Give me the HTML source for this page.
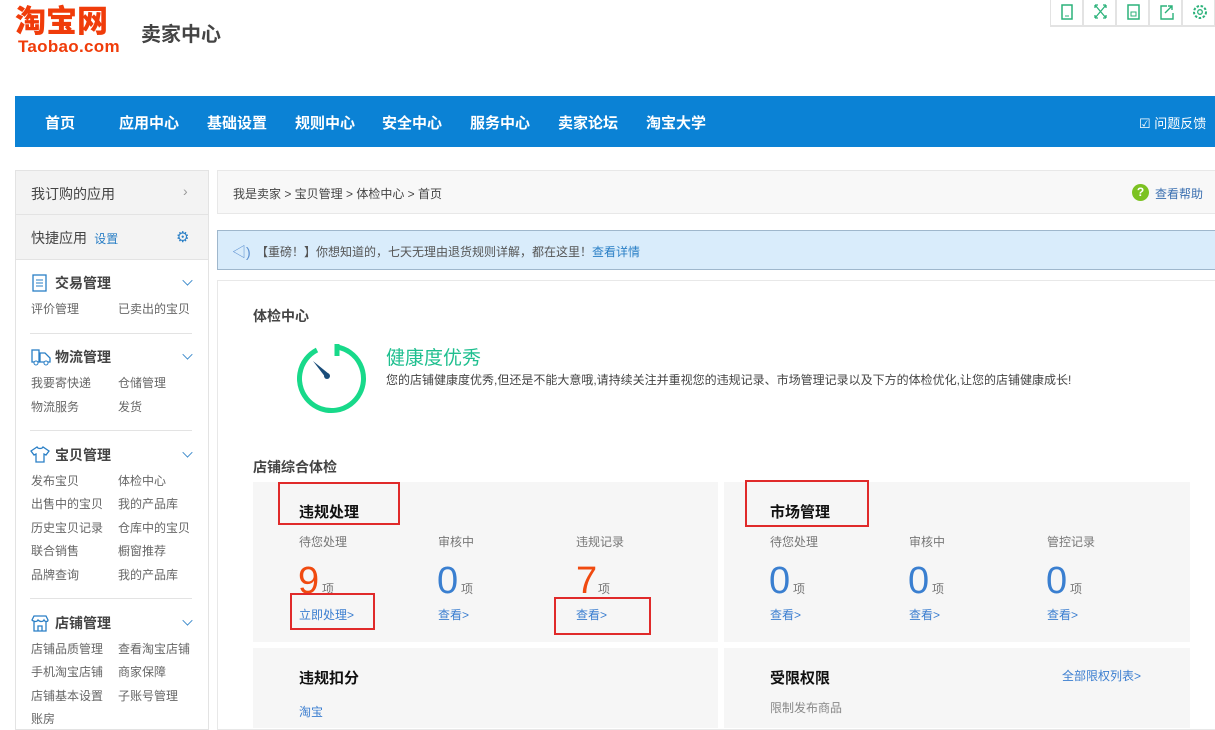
<!DOCTYPE html>
<html><head><meta charset="utf-8"><style>
*{margin:0;padding:0;box-sizing:border-box}
body{width:1215px;height:724px;overflow:hidden;background:#fff;font-family:"Liberation Sans","Noto Sans CJK SC",sans-serif;color:#333;position:relative;font-size:12px}
.a{position:absolute;white-space:nowrap}
.nav{left:15px;top:96px;width:1200px;height:51px;background:#0b82d5}
.nav span{position:absolute;top:16px;color:#fff;font-size:15px;font-weight:bold}
.tb{top:0;width:33px;height:26px;border:1px solid #e3e3e3;border-top:none}
.side{left:15px;top:170px;width:194px;height:560px;border:1px solid #e3e3e3;background:#fff}
.gh{background:#f3f3f3;border-bottom:1px solid #e3e3e3}
.t{font-size:14px;font-weight:bold;color:#444}
.it{font-size:12px;color:#666}
.dv{left:30px;width:162px;height:1px;background:#e3e3e3}
.chev{width:9px;height:9px;border-right:1.5px solid #2a7fc6;border-bottom:1.5px solid #2a7fc6;transform:rotate(45deg) scale(0.8,0.8)}
.card{background:#f6f6f6}
.lb{font-size:12px;color:#777}
.big{font-size:38px;line-height:38px}
.lk{color:#3b7ed0;font-size:12px}
.red{border:2px solid #e02a2a}
</style></head><body>
<div class="a" style="left:15px;top:6px;font-size:31px;line-height:31px;font-weight:900;color:#f03c0a">淘宝网</div>
<div class="a" style="left:18px;top:38px;font-size:17px;line-height:18px;font-weight:bold;color:#f03c0a;letter-spacing:0.3px">Taobao.com</div>
<div class="a" style="left:141px;top:18px;font-size:20px;font-weight:bold;color:#444">卖家中心</div>
<div class="a" style="left:1050px;top:26px;width:165px;height:1px;background:#e3e3e3"></div>
<div class="a tb" style="left:1050px"><svg width="33" height="26"><rect x="11" y="5" width="10" height="14" fill="none" stroke="#2bb27a" stroke-width="1.5"/><line x1="14" y1="16" x2="18" y2="16" stroke="#2bb27a"/></svg></div>
<div class="a tb" style="left:1083px"><svg width="33" height="26"><path d="M11 5l11 13M22 5L11 18M11 5h3M11 5v3M22 5h-3M22 5v3M11 18h3M11 18v-3M22 18h-3M22 18v-3" stroke="#2bb27a" stroke-width="1.3" fill="none"/></svg></div>
<div class="a tb" style="left:1116px"><svg width="33" height="26"><rect x="11" y="5" width="11" height="14" fill="none" stroke="#2bb27a" stroke-width="1.5"/><rect x="14" y="12" width="5" height="4" fill="none" stroke="#2bb27a"/></svg></div>
<div class="a tb" style="left:1149px"><svg width="33" height="26"><path d="M17 6h-6v13h12v-6M15 13l7-7M18 6h4v4" stroke="#2bb27a" stroke-width="1.4" fill="none"/></svg></div>
<div class="a tb" style="left:1182px"><svg width="33" height="26"><circle cx="17" cy="12" r="6" fill="none" stroke="#2bb27a" stroke-width="2" stroke-dasharray="2.5 1.6"/><circle cx="17" cy="12" r="2.3" fill="none" stroke="#2bb27a" stroke-width="1.3"/></svg></div>

<div class="a nav">
<span style="left:30px">首页</span><span style="left:104px">应用中心</span><span style="left:192px">基础设置</span><span style="left:280px">规则中心</span><span style="left:367px">安全中心</span><span style="left:455px">服务中心</span><span style="left:543px">卖家论坛</span><span style="left:631px">淘宝大学</span>
<span style="left:1124px;font-weight:normal;font-size:13px;top:17px">☑ 问题反馈</span>
</div>

<div class="a side"></div>
<div class="a gh" style="left:16px;top:171px;width:192px;height:44px"></div>
<div class="a" style="left:31px;top:184px;font-size:14px;color:#444">我订购的应用</div>
<div class="a" style="left:183px;top:183px;font-size:14px;color:#999">›</div>
<div class="a gh" style="left:16px;top:215px;width:192px;height:45px"></div>
<div class="a" style="left:31px;top:228px;font-size:14px;color:#444">快捷应用 <span style="font-size:12px;color:#2a7fc6">&nbsp;设置</span></div>
<div class="a" style="left:176px;top:228px;font-size:15px;color:#2a7fc6">⚙</div>

<svg class="a" style="left:31px;top:274px" width="18" height="18"><rect x="2" y="1" width="13" height="16" fill="none" stroke="#2a7fc6" stroke-width="1.3"/><path d="M5 6h7M5 9h7M5 12h7" stroke="#2a7fc6"/></svg>
<div class="a t" style="left:55px;top:273px">交易管理</div><div class="a chev" style="left:183px;top:276px"></div>
<div class="a it" style="left:31px;top:300px">评价管理</div><div class="a it" style="left:118px;top:300px">已卖出的宝贝</div>
<div class="a dv" style="top:333px"></div>
<svg class="a" style="left:31px;top:348px" width="22" height="18"><rect x="1" y="2" width="7" height="12" fill="none" stroke="#2a7fc6" stroke-width="1.3"/><path d="M9 5h5l5 5v4H9z" fill="none" stroke="#2a7fc6" stroke-width="1.3"/><circle cx="5" cy="15" r="2" fill="#fff" stroke="#2a7fc6"/><circle cx="15" cy="15" r="2" fill="#fff" stroke="#2a7fc6"/></svg>
<div class="a t" style="left:55px;top:347px">物流管理</div><div class="a chev" style="left:183px;top:350px"></div>
<div class="a it" style="left:31px;top:374px">我要寄快递</div><div class="a it" style="left:118px;top:374px">仓储管理</div>
<div class="a it" style="left:31px;top:398px">物流服务</div><div class="a it" style="left:118px;top:398px">发货</div>
<div class="a dv" style="top:430px"></div>
<svg class="a" style="left:30px;top:445px" width="20" height="18"><path d="M7 2L1 6l3 4 2-1v8h8V9l2 1 3-4-6-4c-1 2-5 2-6 0z" fill="none" stroke="#2a7fc6" stroke-width="1.3"/></svg>
<div class="a t" style="left:55px;top:445px">宝贝管理</div><div class="a chev" style="left:183px;top:448px"></div>
<div class="a it" style="left:31px;top:472px">发布宝贝</div><div class="a it" style="left:118px;top:472px">体检中心</div>
<div class="a it" style="left:31px;top:495px">出售中的宝贝</div><div class="a it" style="left:118px;top:495px">我的产品库</div>
<div class="a it" style="left:31px;top:519px">历史宝贝记录</div><div class="a it" style="left:118px;top:519px">仓库中的宝贝</div>
<div class="a it" style="left:31px;top:542px">联合销售</div><div class="a it" style="left:118px;top:542px">橱窗推荐</div>
<div class="a it" style="left:31px;top:566px">品牌查询</div><div class="a it" style="left:118px;top:566px">我的产品库</div>
<div class="a dv" style="top:598px"></div>
<svg class="a" style="left:30px;top:614px" width="20" height="19"><path d="M2 6l2-4h12l2 4c0 2-3 2-4 0-1 2-4 2-6 0-1 2-4 2-6 0zM4 8v9h12V8M8 17v-5h4v5" fill="none" stroke="#2a7fc6" stroke-width="1.3"/></svg>
<div class="a t" style="left:55px;top:613px">店铺管理</div><div class="a chev" style="left:183px;top:616px"></div>
<div class="a it" style="left:31px;top:640px">店铺品质管理</div><div class="a it" style="left:118px;top:640px">查看淘宝店铺</div>
<div class="a it" style="left:31px;top:663px">手机淘宝店铺</div><div class="a it" style="left:118px;top:663px">商家保障</div>
<div class="a it" style="left:31px;top:687px">店铺基本设置</div><div class="a it" style="left:118px;top:687px">子账号管理</div>
<div class="a it" style="left:31px;top:710px">账房</div>

<div class="a" style="left:217px;top:170px;width:998px;height:44px;background:#f8f8f8;border:1px solid #e8e8e8;border-right:none"></div>
<div class="a" style="left:233px;top:185px;color:#444">我是卖家 &gt; 宝贝管理 &gt; 体检中心 &gt; 首页</div>
<div class="a" style="left:1132px;top:184px;width:17px;height:17px;border-radius:50%;background:#7cc222;color:#fff;font-size:12px;font-weight:bold;text-align:center;line-height:17px">?</div>
<div class="a" style="left:1155px;top:185px;color:#3a6fb0">查看帮助</div>
<div class="a" style="left:217px;top:230px;width:998px;height:40px;background:#d9ecfb;border:1px solid #9fb7cc;border-right:none"></div>
<div class="a" style="left:232px;top:242px;color:#5a8fd0;font-size:14px">◁)</div>
<div class="a" style="left:256px;top:243px;color:#555">【重磅！】你想知道的，七天无理由退货规则详解，都在这里！<span style="color:#2a7fc6">查看详情</span></div>
<div class="a" style="left:217px;top:280px;width:998px;height:450px;border:1px solid #e8e8e8;border-right:none"></div>

<div class="a" style="left:253px;top:306px;font-size:14px;font-weight:bold;color:#444">体检中心</div>
<svg class="a" style="left:290px;top:338px" width="80" height="80"><path d="M27 12 A32 32 0 1 0 47 9" fill="none" stroke="#18d98a" stroke-width="5"/><line x1="47" y1="6" x2="47" y2="18" stroke="#18d98a" stroke-width="5"/><path d="M23 23 L39 36 L36 40 Z" fill="#1a4d7a"/><circle cx="37" cy="38" r="3" fill="#1a4d7a"/></svg>
<div class="a" style="left:386px;top:343px;font-size:19px;color:#1fbf8f">健康度优秀</div>
<div class="a" style="left:386px;top:371px;font-size:12px;color:#444">您的店铺健康度优秀,但还是不能大意哦,请持续关注并重视您的违规记录、市场管理记录以及下方的体检优化,让您的店铺健康成长!</div>
<div class="a" style="left:253px;top:457px;font-size:14px;font-weight:bold;color:#444">店铺综合体检</div>

<div class="a card" style="left:253px;top:482px;width:465px;height:160px"></div>
<div class="a card" style="left:724px;top:482px;width:466px;height:160px"></div>
<div class="a card" style="left:253px;top:648px;width:465px;height:80px"></div>
<div class="a card" style="left:724px;top:648px;width:466px;height:80px"></div>

<div class="a red" style="left:278px;top:482px;width:122px;height:43px"></div>
<div class="a" style="left:299px;top:501px;font-size:15px;font-weight:bold;color:#111">违规处理</div>
<div class="a lb" style="left:299px;top:533px">待您处理</div><div class="a lb" style="left:438px;top:533px">审核中</div><div class="a lb" style="left:576px;top:533px">违规记录</div>
<div class="a big" style="left:298px;top:562px;color:#f04a10">9</div><div class="a lb" style="left:322px;top:580px">项</div>
<div class="a big" style="left:437px;top:562px;color:#3a7fd0">0</div><div class="a lb" style="left:461px;top:580px">项</div>
<div class="a big" style="left:576px;top:562px;color:#f04a10">7</div><div class="a lb" style="left:598px;top:580px">项</div>
<div class="a lk" style="left:299px;top:606px">立即处理&gt;</div><div class="a lk" style="left:438px;top:606px">查看&gt;</div><div class="a lk" style="left:576px;top:606px">查看&gt;</div>
<div class="a red" style="left:290px;top:593px;width:85px;height:37px"></div>
<div class="a red" style="left:554px;top:597px;width:97px;height:38px"></div>

<div class="a red" style="left:745px;top:480px;width:124px;height:47px"></div>
<div class="a" style="left:770px;top:501px;font-size:15px;font-weight:bold;color:#111">市场管理</div>
<div class="a lb" style="left:770px;top:533px">待您处理</div><div class="a lb" style="left:909px;top:533px">审核中</div><div class="a lb" style="left:1047px;top:533px">管控记录</div>
<div class="a big" style="left:769px;top:562px;color:#3a7fd0">0</div><div class="a lb" style="left:793px;top:580px">项</div>
<div class="a big" style="left:908px;top:562px;color:#3a7fd0">0</div><div class="a lb" style="left:932px;top:580px">项</div>
<div class="a big" style="left:1046px;top:562px;color:#3a7fd0">0</div><div class="a lb" style="left:1070px;top:580px">项</div>
<div class="a lk" style="left:770px;top:606px">查看&gt;</div><div class="a lk" style="left:909px;top:606px">查看&gt;</div><div class="a lk" style="left:1047px;top:606px">查看&gt;</div>

<div class="a" style="left:299px;top:667px;font-size:15px;font-weight:bold;color:#111">违规扣分</div>
<div class="a lk" style="left:299px;top:703px">淘宝</div>
<div class="a" style="left:770px;top:667px;font-size:15px;font-weight:bold;color:#111">受限权限</div>
<div class="a lk" style="left:1062px;top:667px">全部限权列表&gt;</div>
<div class="a lb" style="left:770px;top:699px;color:#888">限制发布商品</div>
</body></html>
